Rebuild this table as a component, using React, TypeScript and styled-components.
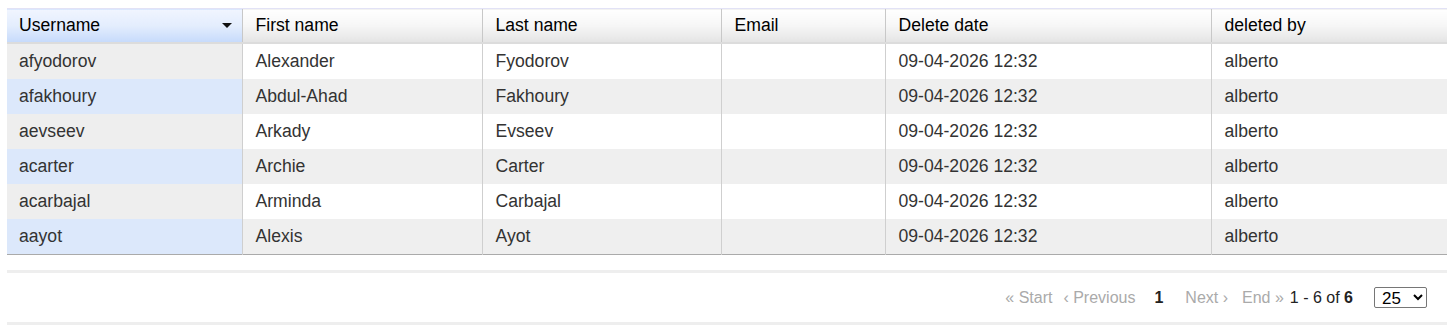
import React from 'react';
import styled, { createGlobalStyle } from 'styled-components';

const GlobalStyle = createGlobalStyle`
  body {
    margin: 8px 5px 0 7px;
    font-family: "Liberation Sans", Arial, sans-serif;
    background: #fff;
  }
`

const Grid = styled.table`
  width: 1440px;
  border-collapse: collapse;
  table-layout: fixed;
  font-size: 17.6px;
  border-bottom: 1px solid #aaa;
`

const HeadCell = styled.th<{ sorted?: boolean }>`
  height: 33px;
  padding: 0 12px 0 13px;
  text-align: left;
  font-weight: normal;
  color: #000;
  border-top: 1px solid #e2e2f6;
  border-bottom: 2px solid #dcdcdc;
  border-left: 1px solid #c8c8c8;
  background: ${p => p.sorted
    ? 'linear-gradient(to bottom, #f0f5ff 0%, #e3edfd 50%, #c6dafb 100%)'
    : 'linear-gradient(to bottom, #ffffff 0%, #f6f6f6 50%, #e4e4e4 100%)'};
  &:first-child {
    border-left: none;
    padding-left: 12px;
  }
`

const HeadInner = styled.div`
  display: flex;
  align-items: center;
  justify-content: space-between;
`

const SortArrow = styled.span`
  width: 0;
  height: 0;
  margin-right: -2px;
  border-left: 5px solid transparent;
  border-right: 5px solid transparent;
  border-top: 5px solid #111;
`

const Cell = styled.td<{ even?: boolean, sorted?: boolean }>`
  height: 35px;
  padding: 0 12px 0 13px;
  color: #333;
  border-left: 1px solid #cfcfcf;
  background: ${p => p.sorted
    ? (p.even ? '#dce8fb' : '#eeeeee')
    : (p.even ? '#efefef' : '#ffffff')};
  white-space: nowrap;
  &:first-child {
    border-left: none;
    padding-left: 12px;
  }
`

const Footer = styled.div`
  width: 1440px;
  margin-top: 15px;
  border-top: 3px solid #eeeeee;
  border-bottom: 3px solid #eeeeee;
  height: 55px;
  display: flex;
  align-items: center;
  justify-content: flex-end;
  padding-right: 20px;
  box-sizing: border-box;
  font-size: 16px;
  color: #333;
`

const PageLink = styled.span<{ gap?: number }>`
  color: #aaa;
  margin-right: ${p => p.gap ?? 11}px;
`

const Current = styled.b`
  color: #222;
  margin: 0 22px 0 8px;
`

const Count = styled.span`
  margin-left: 6px;
  color: #222;
`

const PageSize = styled.select`
  margin-left: 21px;
  width: 53px;
  height: 21px;
  font-family: "Liberation Sans", Arial, sans-serif;
  font-size: 17px;
  color: #000;
  border: 1px solid #767676;
  border-radius: 2px;
  background: #fff;
  padding: 0 0 0 3px;
`

type Row = {
  username: string,
  first: string,
  last: string,
  email: string,
  date: string,
  by: string,
}

const rows: Row[] = [
  { username: 'afyodorov', first: 'Alexander', last: 'Fyodorov', email: '', date: '09-04-2026 12:32', by: 'alberto' },
  { username: 'afakhoury', first: 'Abdul-Ahad', last: 'Fakhoury', email: '', date: '09-04-2026 12:32', by: 'alberto' },
  { username: 'aevseev', first: 'Arkady', last: 'Evseev', email: '', date: '09-04-2026 12:32', by: 'alberto' },
  { username: 'acarter', first: 'Archie', last: 'Carter', email: '', date: '09-04-2026 12:32', by: 'alberto' },
  { username: 'acarbajal', first: 'Arminda', last: 'Carbajal', email: '', date: '09-04-2026 12:32', by: 'alberto' },
  { username: 'aayot', first: 'Alexis', last: 'Ayot', email: '', date: '09-04-2026 12:32', by: 'alberto' },
]

const widths = [235, 240, 239, 164, 326, 236]

export default function App() {
  return (
    <>
      <GlobalStyle />
      <Grid>
        <colgroup>
          {widths.map((w, i) => <col key={i} style={{ width: w }} />)}
        </colgroup>
        <thead>
          <tr>
            <HeadCell sorted>
              <HeadInner>Username<SortArrow /></HeadInner>
            </HeadCell>
            <HeadCell>First name</HeadCell>
            <HeadCell>Last name</HeadCell>
            <HeadCell>Email</HeadCell>
            <HeadCell>Delete date</HeadCell>
            <HeadCell>deleted by</HeadCell>
          </tr>
        </thead>
        <tbody>
          {rows.map((r, i) => {
            const even = i % 2 === 1
            return (
              <tr key={r.username}>
                <Cell sorted even={even}>{r.username}</Cell>
                <Cell even={even}>{r.first}</Cell>
                <Cell even={even}>{r.last}</Cell>
                <Cell even={even}>{r.email}</Cell>
                <Cell even={even}>{r.date}</Cell>
                <Cell even={even}>{r.by}</Cell>
              </tr>
            )
          })}
        </tbody>
      </Grid>
      <Footer>
        <PageLink>« Start</PageLink>
        <PageLink>‹ Previous</PageLink>
        <Current>1</Current>
        <PageLink gap={14}>Next ›</PageLink>
        <PageLink gap={0}>End »</PageLink>
        <Count>1 - 6 of <b>6</b></Count>
        <PageSize defaultValue="25">
          <option>10</option>
          <option>25</option>
          <option>50</option>
          <option>100</option>
        </PageSize>
      </Footer>
    </>
  )
}
